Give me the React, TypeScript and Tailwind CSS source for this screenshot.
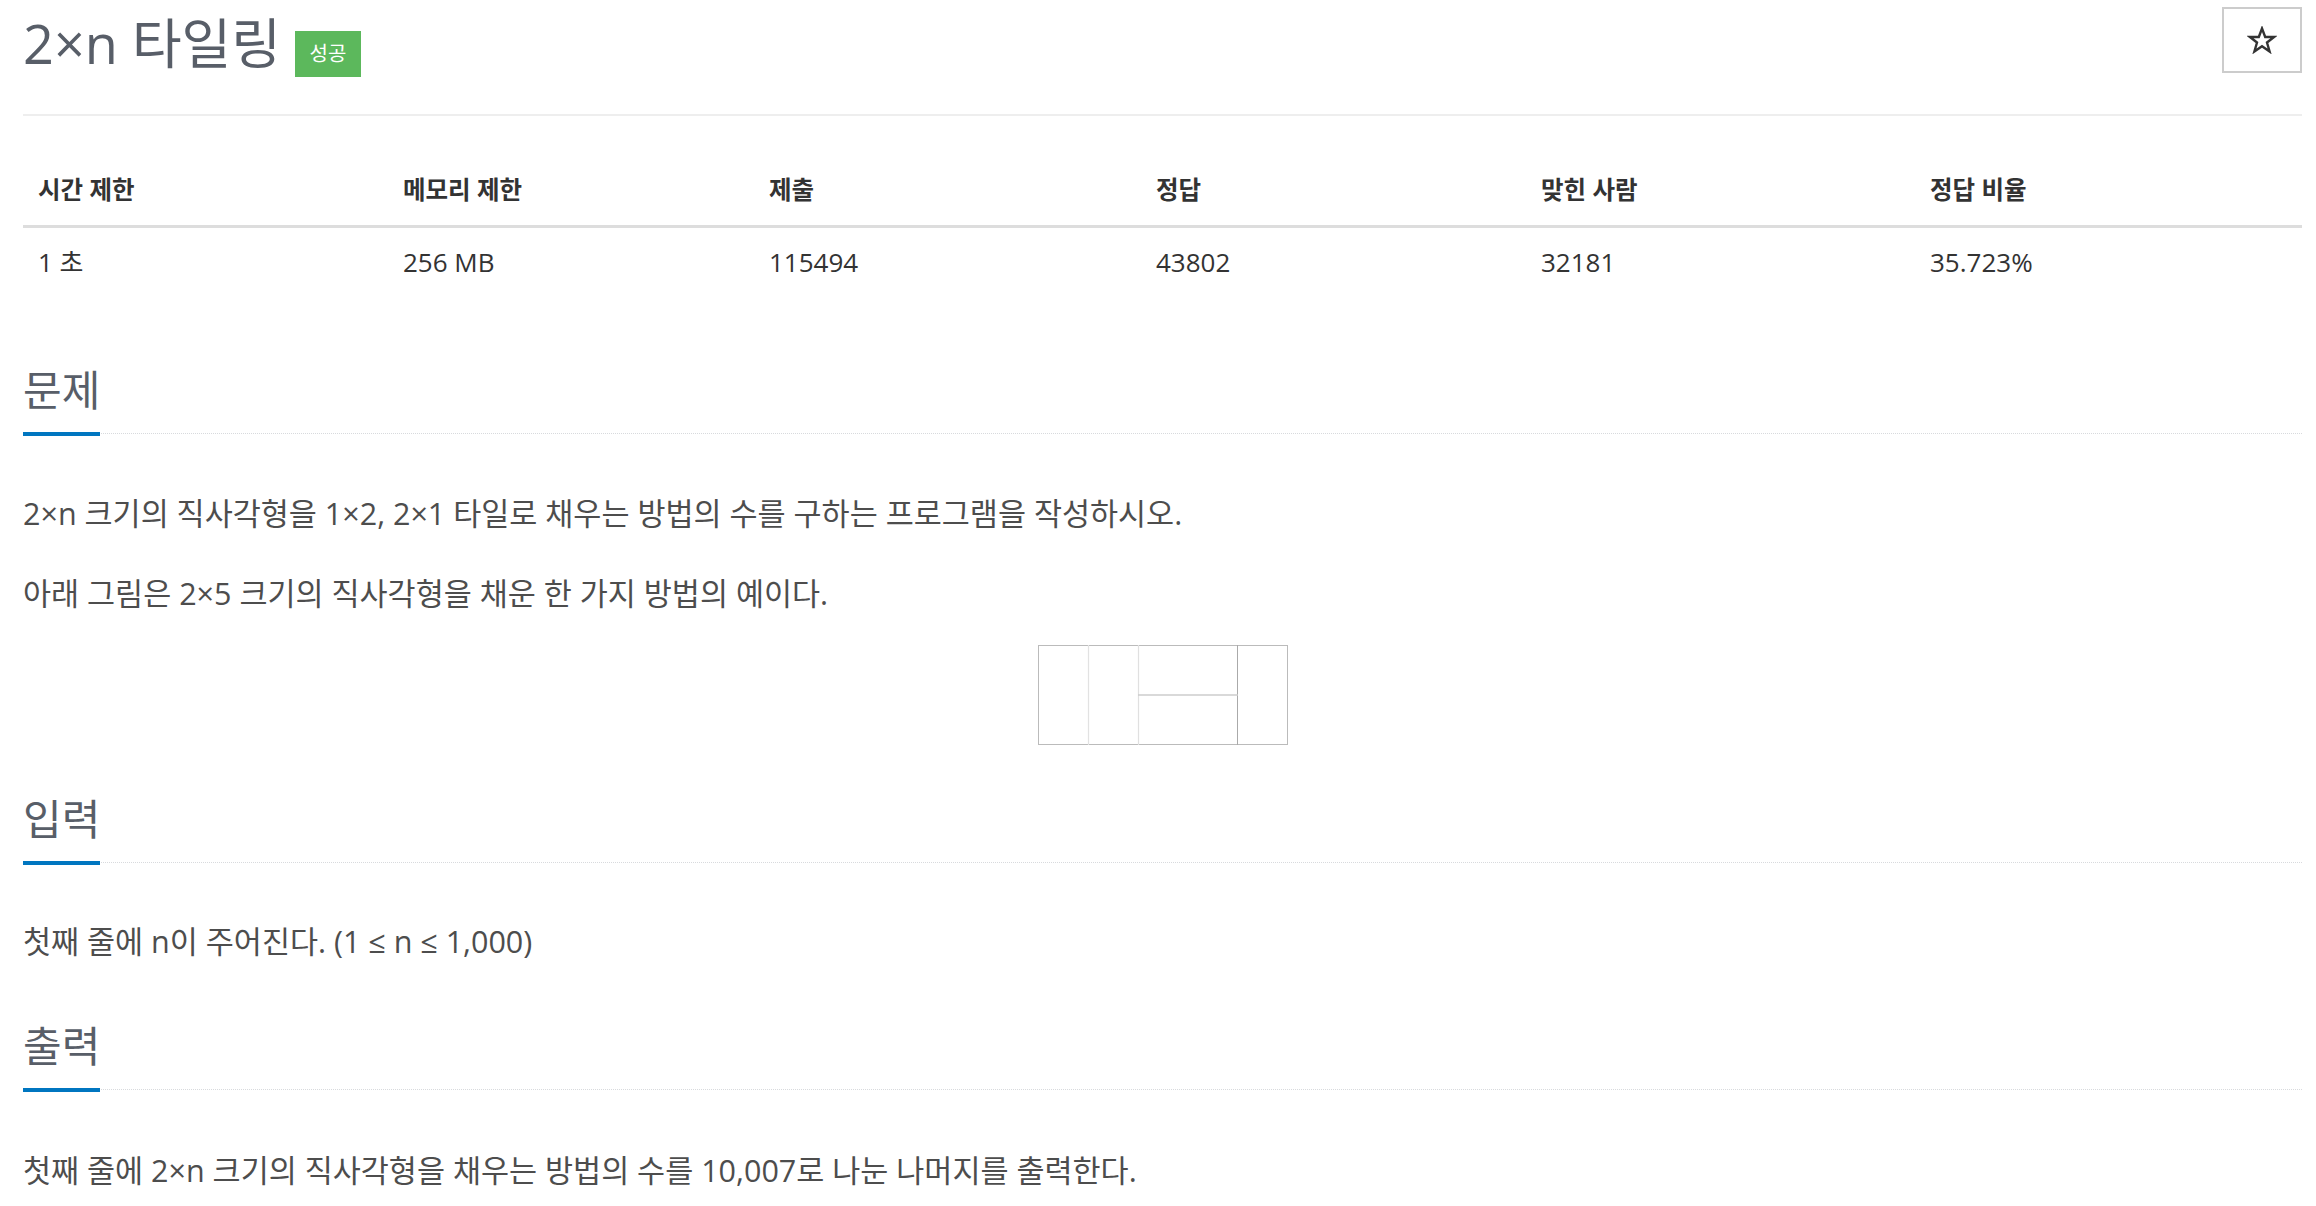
const font = "font-['Open_Sans','Noto_Sans_CJK_KR',sans-serif]";

const info = [
  { label: "시간 제한", value: "1 초", w: "w-[365px]" },
  { label: "메모리 제한", value: "256 MB", w: "w-[366px]" },
  { label: "제출", value: "115494", w: "w-[387px]" },
  { label: "정답", value: "43802", w: "w-[385px]" },
  { label: "맞힌 사람", value: "32181", w: "w-[389px]" },
  { label: "정답 비율", value: "35.723%", w: "w-[387px]" },
];

function Headline({ title }: { title: string }) {
  return (
    <div className="border-b border-dotted border-[#d8dadd]">
      <h2 className="-mb-[3px] inline-block border-b-4 border-[#0076c0] pb-[17px] text-[42px] font-normal leading-[50px] text-[#585e68]">
        {title}
      </h2>
    </div>
  );
}

function Tiling() {
  return (
    <svg width="250" height="100" viewBox="0 0 250 100" className="block">
      <rect x="0.5" y="0.5" width="249" height="99" fill="#fff" stroke="#bbb" strokeWidth="1" />
      <line x1="50.5" y1="0" x2="50.5" y2="100" stroke="#e2e2e2" strokeWidth="1.2" />
      <line x1="100.5" y1="0" x2="100.5" y2="100" stroke="#e0e0e0" strokeWidth="1.2" />
      <line x1="199.5" y1="0" x2="199.5" y2="100" stroke="#aaa" strokeWidth="1" />
      <line x1="100" y1="50" x2="200" y2="50" stroke="#ccc" strokeWidth="1.6" />
    </svg>
  );
}

export default function App() {
  return (
    <div className={`min-h-screen bg-white pl-[23px] pr-[14px] ${font}`}>
      {/* title */}
      <div className="flex h-[116px] items-start justify-between border-b-2 border-[#eeeeee]">
        <h1 className="mt-[13px] flex items-start text-[54px] font-normal leading-[60px] text-[#585e68]">
          <span>2×n 타일링</span>
          <span className="ml-[14px] mt-[18px] flex h-[46px] w-[66px] items-center justify-center bg-[#5cb85c] text-[20px] leading-none text-white">
            성공
          </span>
        </h1>
        <button className="mt-[7px] flex h-[66px] w-[80px] items-center justify-center border-2 border-[#cccccc] bg-white">
          <svg width="30" height="28" viewBox="0 0 30 28">
            <polygon
              points="15,2.5 18.2,11 27,11 20,16.5 22.6,25.5 15,20.2 7.4,25.5 10,16.5 3,11 11.8,11"
              fill="none"
              stroke="#333"
              strokeWidth="2.4"
              strokeLinejoin="miter"
            />
          </svg>
        </button>
      </div>

      {/* problem info */}
      <table className="mt-[40px] w-full border-collapse text-[#333]">
        <thead>
          <tr className="border-b-[3px] border-[#dddddd]">
            {info.map((c) => (
              <th key={c.label} className={`${c.w} h-[70px] px-[15px] text-left align-middle text-[24.5px] font-bold`}>
                {c.label}
              </th>
            ))}
          </tr>
        </thead>
        <tbody>
          <tr>
            {info.map((c) => (
              <td key={c.label} className="h-[68px] px-[15px] pt-[3px] text-left align-middle text-[26px]">
                {c.value}
              </td>
            ))}
          </tr>
        </tbody>
      </table>

      {/* 문제 */}
      <section className="mt-[71px]">
        <Headline title="문제" />
        <div className="mt-[57px] text-[30.5px] leading-[45px] text-[#4d4d4d]">
          <p className="mb-[35px]">2×n 크기의 직사각형을 1×2, 2×1 타일로 채우는 방법의 수를 구하는 프로그램을 작성하시오.</p>
          <p className="mb-[29px]">아래 그림은 2×5 크기의 직사각형을 채운 한 가지 방법의 예이다.</p>
          <div className="flex justify-center">
            <Tiling />
          </div>
        </div>
      </section>

      {/* 입력 */}
      <section className="mt-[49px]">
        <Headline title="입력" />
        <p className="mt-[56px] text-[30.5px] leading-[45px] text-[#4d4d4d]">첫째 줄에 n이 주어진다. (1 ≤ n ≤ 1,000)</p>
      </section>

      {/* 출력 */}
      <section className="mt-[57px]">
        <Headline title="출력" />
        <p className="mt-[58px] text-[30.5px] leading-[45px] text-[#4d4d4d]">
          첫째 줄에 2×n 크기의 직사각형을 채우는 방법의 수를 10,007로 나눈 나머지를 출력한다.
        </p>
      </section>
    </div>
  );
}
